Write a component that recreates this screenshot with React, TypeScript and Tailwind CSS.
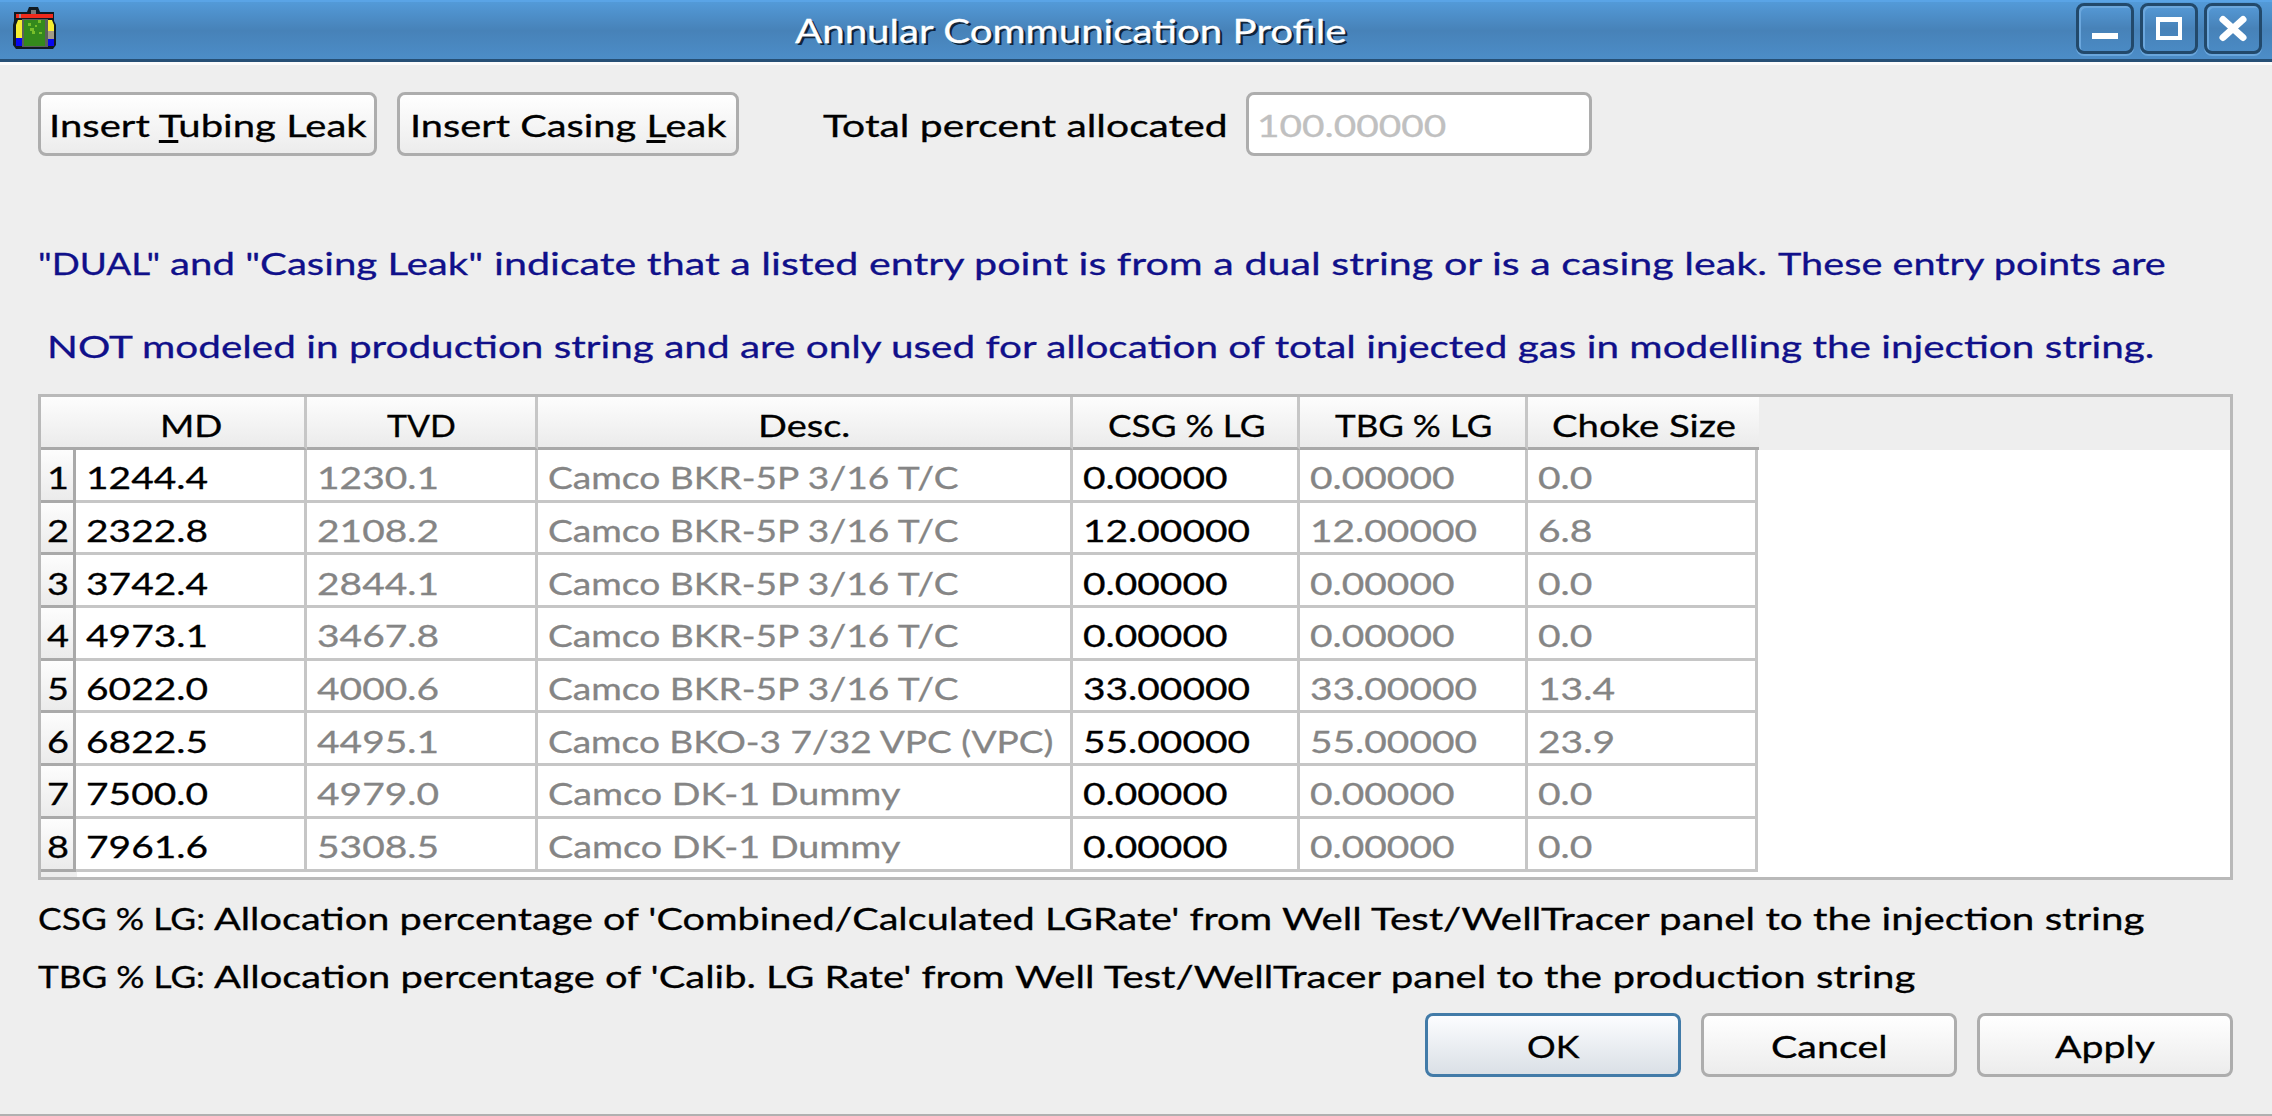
import { useLayoutEffect, useRef, useState } from "react";
import type { ReactNode } from "react";

/** Single line of text stretched horizontally to a given width. */
function Fit({ w, children }: { w: number; children: ReactNode }) {
  const ref = useRef<HTMLSpanElement>(null);
  const [scale, setScale] = useState(1.2);
  useLayoutEffect(() => {
    if (ref.current) setScale(w / ref.current.offsetWidth);
  }, [w]);
  return (
    <span className="block shrink-0 whitespace-pre text-left" style={{ width: w }}>
      <span ref={ref} className="inline-block origin-left" style={{ transform: `scaleX(${scale})` }}>
        {children}
      </span>
    </span>
  );
}

/** A sentence made of consecutive stretched pieces. */
function Line({ parts }: { parts: [string, number][] }) {
  return (
    <div className="flex">
      {parts.map(([text, w]) => (
        <Fit key={text} w={w}>
          {text}
        </Fit>
      ))}
    </div>
  );
}

function Key({ children }: { children: string }) {
  return (
    <span className="underline decoration-[2.5px] underline-offset-[3px] [text-decoration-skip-ink:none]">
      {children}
    </span>
  );
}

const DIGIT = 22.55;
const DOT = 9;
const numberWidth = (s: string) => (s.length - 1) * DIGIT + DOT;

const rows = [
  ["1244.4", "1230.1", "Camco BKR-5P 3/16 T/C", "0.00000", "0.0"],
  ["2322.8", "2108.2", "Camco BKR-5P 3/16 T/C", "12.00000", "6.8"],
  ["3742.4", "2844.1", "Camco BKR-5P 3/16 T/C", "0.00000", "0.0"],
  ["4973.1", "3467.8", "Camco BKR-5P 3/16 T/C", "0.00000", "0.0"],
  ["6022.0", "4000.6", "Camco BKR-5P 3/16 T/C", "33.00000", "13.4"],
  ["6822.5", "4495.1", "Camco BKO-3 7/32 VPC (VPC)", "55.00000", "23.9"],
  ["7500.0", "4979.0", "Camco DK-1 Dummy", "0.00000", "0.0"],
  ["7961.6", "5308.5", "Camco DK-1 Dummy", "0.00000", "0.0"],
];

const descWidths: Record<string, number> = {
  "Camco BKR-5P 3/16 T/C": 411,
  "Camco BKO-3 7/32 VPC (VPC)": 505,
  "Camco DK-1 Dummy": 353,
};

const COLS = "grid-cols-[35px_231px_231px_535px_227px_228px_230px]";

function Cell({ text, w, dark }: { text: string; w: number; dark?: boolean }) {
  return (
    <div
      className={`flex items-center border-r-[3px] border-b-[3px] border-[#c6c6c6] bg-white pl-[10px] pt-[5px] ${
        dark ? "text-black" : "text-[#858585]"
      }`}
    >
      <Fit w={w}>{text}</Fit>
    </div>
  );
}

function Head({ text, w, cls }: { text: string; w: number; cls: string }) {
  return (
    <div
      className={`flex items-center justify-center border-b-[3px] border-b-[#a9a9a9] bg-linear-to-b from-[#fdfdfd] to-[#ebebeb] pt-[5px] ${cls}`}
    >
      <Fit w={w}>{text}</Fit>
    </div>
  );
}

function PushButton({ w, primary, children }: { w: string; primary?: boolean; children: ReactNode }) {
  return (
    <button
      className={`flex h-16 items-center justify-center rounded-[8px] border-[3px] bg-linear-to-b pt-px ${w} ${
        primary ? "border-[#427ba8] from-[#fcfdff] to-[#dae0e6]" : "border-[#adadad] from-white to-[#ececec]"
      }`}
    >
      {children}
    </button>
  );
}

function WindowButton({ children }: { children: ReactNode }) {
  return (
    <div className="flex h-[51px] w-[58px] items-center justify-center rounded-[8px] border-[3px] border-[#22496b] bg-linear-to-b from-[#5599d6] via-[#4782b8] to-[#4a8ac4] shadow-[0_2px_0_#6aa6dc,inset_2px_2px_0_#6ba7dd]">
      <svg width="52" height="45" viewBox="0 0 52 45">
        {children}
      </svg>
    </div>
  );
}

function AppIcon() {
  return (
    <svg width="48" height="44" viewBox="0 0 48 44">
      <path d="M17 0h9l2 5h14v9l2 4v20l-3 4H4l-3-4V18l1-4V5h13z" fill="#101a22" />
      <path d="M19 3h5v4h-5z" fill="#777" />
      <rect x="4" y="7" width="37" height="4" fill="#f02a1c" />
      <rect x="7" y="7" width="2" height="4" fill="#9b8a9b" />
      <path d="M6 13h5v18H4V18z" fill="#f6ee32" />
      <path d="M36 13h4l2 5v13h-6z" fill="#f6ee32" />
      <path d="M36 24h6v8h-6z" fill="#a39a88" />
      <rect x="4" y="31" width="7" height="8" fill="#0808f0" />
      <rect x="36" y="32" width="6" height="7" fill="#0808f0" />
      <rect x="10" y="12" width="26" height="28" fill="#59605c" />
      <rect x="12" y="13" width="21" height="26" fill="#348a1c" />
      <path d="M16 16h3v3h-3zM18 21h4v3h-4zM20 24h3v3h-3zM26 13h3v3h-3zM23 18h2v2h-2zM27 25h3v2h-3z" fill="#78bf2a" />
    </svg>
  );
}

export default function App() {
  return (
    <div className="flex h-[1116px] w-[2272px] flex-col overflow-hidden border-b-2 border-[#b0b0b0] bg-[#eeeeee] font-['Lato',sans-serif] text-[31px] leading-[38px] text-black [-webkit-text-stroke:0.3px_currentColor]">
      <header className="flex h-[62px] shrink-0 items-start border-t-2 border-b-[3px] border-t-[#5aa4e6] border-b-[#264f75] bg-linear-to-b from-[#539ad8] via-[#4782b8] to-[#4c8dc8] pl-[12px] pr-[10px]">
        <div className="w-[783px] pt-[5px]">
          <AppIcon />
        </div>
        <div className="pt-[10px] text-[32px] text-white [text-shadow:2px_2px_0_#10243a]">
          <Fit w={551}>Annular Communication Profile</Fit>
        </div>
        <div className="ml-auto flex gap-[6px] pt-px">
          <WindowButton>
            <rect x="13" y="27" width="26" height="6" fill="#fff" />
          </WindowButton>
          <WindowButton>
            <path d="M13 11h26v23H13zM17 16v14h18V16z" fill="#fff" fillRule="evenodd" />
          </WindowButton>
          <WindowButton>
            <path d="M16 13.500l20 18M36 13.500l-20 18" stroke="#fff" strokeWidth="7" strokeLinecap="round" />
          </WindowButton>
        </div>
      </header>

      <main className="flex flex-1 flex-col border-t-[3px] border-[#fbfbfb] pl-[38px] pr-[39px]">
        <div className="mt-[27px] flex h-[64px] items-center">
          <PushButton w="w-[339px]">
            <Fit w={318}>
              Insert <Key>T</Key>ubing Leak
            </Fit>
          </PushButton>
          <div className="ml-[20px]">
            <PushButton w="w-[342px]">
              <Fit w={317}>
                Insert Casing <Key>L</Key>eak
              </Fit>
            </PushButton>
          </div>
          <div className="ml-[84px] pt-px">
            <Fit w={404}>Total percent allocated</Fit>
          </div>
          <div className="ml-[19px] flex h-16 w-[346px] items-center rounded-[8px] border-[3px] border-[#adadad] bg-white pl-[8px] pt-px text-[#c0c0c0]">
            <Fit w={189}>100.00000</Fit>
          </div>
        </div>

        <div className="mt-[88px] flex flex-col gap-[45px] text-[#10108a]">
          <Line
            parts={[
              ['"DUAL" ', 132],
              ['and "Casing Leak" ', 324],
              ["indicate that a listed entry point is from a dual string or is a casing leak. ", 1284],
              ["These entry points are", 388],
            ]}
          />
          <div className="pl-[9px]">
            <Fit w={2107}>
              NOT modeled in production string and are only used for allocation of total injected gas in modelling the
              injection string.
            </Fit>
          </div>
        </div>

        <section className="mt-[29px] h-[486px] w-[2195px] border-[3px] border-[#b9b9b9] bg-white">
          <div className="flex h-[53px] bg-[#eeeeee]">
            <div className="grid w-[1718px] grid-cols-[266px_231px_535px_227px_228px_231px]">
              <Head text="MD" w={62} cls="border-r-[3px] border-r-[#c6c6c6] pl-[36px]" />
              <Head text="TVD" w={69} cls="border-r-[3px] border-r-[#c6c6c6]" />
              <Head text="Desc." w={92} cls="border-r-[3px] border-r-[#c6c6c6]" />
              <Head text="CSG % LG" w={157} cls="border-r-[3px] border-r-[#c6c6c6] pl-[3px]" />
              <Head text="TBG % LG" w={157} cls="border-r-[3px] border-r-[#c6c6c6] pl-[2px]" />
              <Head text="Choke Size" w={184} cls="" />
            </div>
          </div>
          {rows.map(([md, tvd, desc, pct, choke], i) => (
            <div key={md} className={`grid h-[52.7px] ${COLS}`}>
              <div className="flex items-center justify-center border-r-[3px] border-b-[3px] border-[#a9a9a9] bg-linear-to-b from-[#fdfdfd] to-[#ebebeb] pl-px pt-[5px]">
                <Fit w={22}>{i + 1}</Fit>
              </div>
              <Cell text={md} w={numberWidth(md)} dark />
              <Cell text={tvd} w={numberWidth(tvd)} />
              <Cell text={desc} w={descWidths[desc]} />
              <Cell text={pct} w={numberWidth(pct)} dark />
              <Cell text={pct} w={numberWidth(pct)} />
              <Cell text={choke} w={numberWidth(choke)} />
            </div>
          ))}
          <div className="h-[5px] w-[36px] bg-[#eeeeee]" />
        </section>

        <div className="mt-[19px] flex flex-col gap-[20px]">
          <Line
            parts={[
              ["CSG % LG: ", 176],
              ["Allocation percentage of 'Combined/Calculated LGRate' from ", 1068],
              ["Well Test/WellTracer panel to the injection string", 863],
            ]}
          />
          <Line
            parts={[
              ["TBG % LG: ", 176],
              ["Allocation percentage of 'Calib. LG Rate' from ", 801],
              ["Well Test/WellTracer panel to the production string", 900],
            ]}
          />
        </div>

        <div className="mt-[18px] flex justify-end gap-[20px]">
          <PushButton w="w-[256px]" primary>
            <Fit w={52}>OK</Fit>
          </PushButton>
          <PushButton w="w-[256px]">
            <Fit w={117}>Cancel</Fit>
          </PushButton>
          <PushButton w="w-[256px]">
            <Fit w={100}>Apply</Fit>
          </PushButton>
        </div>
      </main>
    </div>
  );
}
